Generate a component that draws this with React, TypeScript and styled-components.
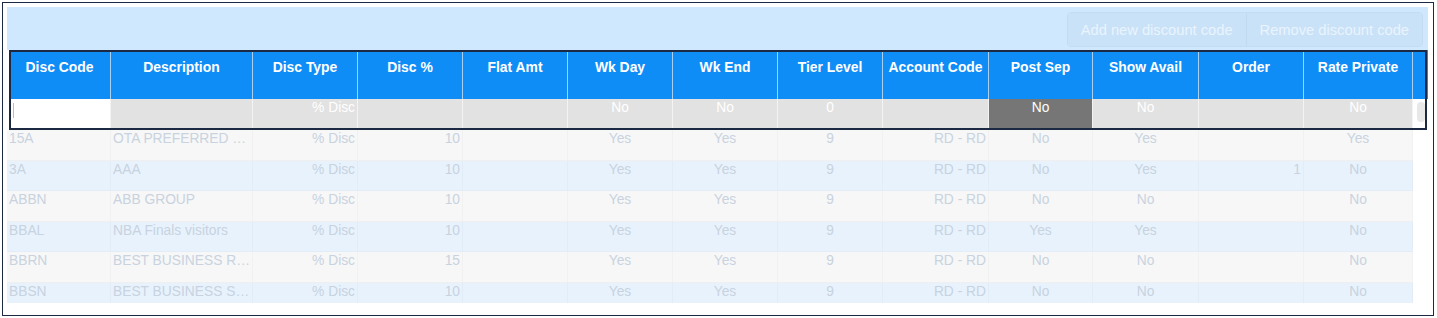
import React from "react"
import styled, { createGlobalStyle } from "styled-components"

type Align = "left" | "center" | "right"

interface Column {
  title: string
  width: number
  align: Align
}

const columns: Column[] = [
  { title: "Disc Code", width: 104, align: "left" },
  { title: "Description", width: 142, align: "left" },
  { title: "Disc Type", width: 105, align: "right" },
  { title: "Disc %", width: 105, align: "right" },
  { title: "Flat Amt", width: 105, align: "right" },
  { title: "Wk Day", width: 105, align: "center" },
  { title: "Wk End", width: 105, align: "center" },
  { title: "Tier Level", width: 105, align: "center" },
  { title: "Account Code", width: 106, align: "right" },
  { title: "Post Sep", width: 104, align: "center" },
  { title: "Show Avail", width: 106, align: "center" },
  { title: "Order", width: 105, align: "right" },
  { title: "Rate Private", width: 109, align: "center" },
]

const rows: string[][] = [
  ["15A", "OTA PREFERRED PARTNER", "% Disc", "10", "", "Yes", "Yes", "9", "RD - RD", "No", "Yes", "", "Yes"],
  ["3A", "AAA", "% Disc", "10", "", "Yes", "Yes", "9", "RD - RD", "No", "Yes", "1", "No"],
  ["ABBN", "ABB GROUP", "% Disc", "10", "", "Yes", "Yes", "9", "RD - RD", "No", "No", "", "No"],
  ["BBAL", "NBA Finals visitors", "% Disc", "10", "", "Yes", "Yes", "9", "RD - RD", "Yes", "Yes", "", "No"],
  ["BBRN", "BEST BUSINESS RATE", "% Disc", "15", "", "Yes", "Yes", "9", "RD - RD", "No", "No", "", "No"],
  ["BBSN", "BEST BUSINESS SPECIAL", "% Disc", "10", "", "Yes", "Yes", "9", "RD - RD", "No", "No", "", "No"],
]

const editValues = ["", "", "% Disc", "", "", "No", "No", "0", "", "No", "No", "", "No"]

// first column is 2px narrower in the frozen block (it sits inside the focus outline)
const template = (shift: number, gutter: number) =>
  columns.map((c, i) => `${i === 0 ? c.width - shift : c.width}px`).join(" ") +
  (gutter ? ` ${gutter}px` : "")

const GlobalStyle = createGlobalStyle`
  html, body {
    margin: 0;
    padding: 0;
    background: #ffffff;
  }
  body {
    font-family: "Liberation Sans", Arial, Helvetica, sans-serif;
  }
`

const Page = styled.div`
  padding: 2px 0 0 2px;
`

const Frame = styled.div`
  box-sizing: border-box;
  width: 1432px;
  height: 314px;
  border: 1px solid #1b2a42;
  background: #ffffff;
  padding: 4px 5px 0 4px;
`

const Panel = styled.div`
  width: 1421px;
  display: flex;
  flex-direction: column;
`

const Toolbar = styled.div`
  height: 43px;
  background: #cfe8fd;
  display: flex;
  justify-content: flex-end;
  align-items: flex-start;
  padding: 5px 5px 0 0;
  box-sizing: border-box;
`

const ButtonGroup = styled.div`
  display: flex;
  height: 35px;
  border: 1px solid #c3dcf2;
  border-radius: 4px;
  overflow: hidden;
  box-sizing: border-box;
`

const ToolButton = styled.button`
  border: none;
  border-left: 1px solid #c1daf0;
  &:first-child {
    border-left: none;
  }
  background: #c9e2f8;
  color: #eaf4fd;
  font-family: "Liberation Sans", Arial, Helvetica, sans-serif;
  font-size: 14.7px;
  padding: 0 13px;
  height: 100%;
  cursor: default;
`

const Frozen = styled.div`
  position: relative;
  margin-left: 2px;
  width: 1419px;

  &::after {
    content: "";
    position: absolute;
    top: 0;
    left: 0;
    right: 1px;
    bottom: 0;
    border: 2px solid #1b2a42;
    pointer-events: none;
  }
`

const HeaderRow = styled.div`
  display: grid;
  grid-template-columns: ${template(2, 15)};
  height: 49px;
  background: #0f8df7;
`

const HeaderCell = styled.div`
  box-sizing: border-box;
  border-right: 1px solid #a9cff2;
  &:last-child {
    border-right: none;
  }
  padding: 9px 2px 0;
  color: #ffffff;
  font-weight: bold;
  font-size: 13.9px;
  line-height: 17px;
  text-align: center;
  white-space: nowrap;
  overflow: hidden;
`

const EditRow = styled.div`
  display: grid;
  grid-template-columns: ${template(2, 15)};
  height: 31px;
`

const EditCell = styled.div<{ $align: Align; $dark?: boolean; $input?: boolean }>`
  box-sizing: border-box;
  background: ${(p) => (p.$input ? "#ffffff" : p.$dark ? "#767676" : "#e2e2e2")};
  border-right: 1px solid #f3f3f3;
  padding: 1px 2px 0;
  color: #ffffff;
  font-size: 13.8px;
  line-height: 16px;
  text-align: ${(p) => p.$align};
  white-space: nowrap;
  overflow: hidden;
`

const Caret = styled.span`
  display: block;
  width: 1px;
  height: 15px;
  margin: 3px 0 0 2px;
  background: #aac0dc;
`

const Gutter = styled.div`
  background: #ffffff;
  padding: 3px 2px 0 4px;
`

const Thumb = styled.div`
  width: 8px;
  height: 20px;
  border-radius: 4px;
  background: #e8e8e8;
`

const Body = styled.div`
  height: 172.7px;
  overflow: hidden;
`

const DataRow = styled.div<{ $alt: boolean }>`
  display: grid;
  grid-template-columns: ${template(0, 0)};
  width: 1406px;
  height: 30.6px;
  box-sizing: border-box;
  border-bottom: 1px solid ${(p) => (p.$alt ? "#e2edf8" : "#efefef")};
  background: ${(p) => (p.$alt ? "#e7f2fd" : "#f7f7f7")};
`

const DataCell = styled.div<{ $align: Align }>`
  box-sizing: border-box;
  border-right: 1px solid rgba(0, 0, 0, 0.025);
  padding: 1px 2px 0 2px;
  color: #c8d3df;
  font-size: 13.8px;
  line-height: 16px;
  text-align: ${(p) => p.$align};
  white-space: nowrap;
  overflow: hidden;
  text-overflow: ellipsis;
`

const App = () => (
  <>
    <GlobalStyle />
    <Page>
      <Frame>
        <Panel>
          <Toolbar>
            <ButtonGroup>
              <ToolButton>Add new discount code</ToolButton>
              <ToolButton>Remove discount code</ToolButton>
            </ButtonGroup>
          </Toolbar>
          <Frozen>
            <HeaderRow>
              {columns.map((c) => (
                <HeaderCell key={c.title}>{c.title}</HeaderCell>
              ))}
              <HeaderCell />
            </HeaderRow>
            <EditRow>
              {columns.map((c, i) => (
                <EditCell
                  key={c.title}
                  $align={c.align}
                  $input={i === 0}
                  $dark={c.title === "Post Sep"}
                >
                  {i === 0 ? <Caret /> : editValues[i]}
                </EditCell>
              ))}
              <Gutter>
                <Thumb />
              </Gutter>
            </EditRow>
          </Frozen>
          <Body>
            {rows.map((r, ri) => (
              <DataRow key={r[0]} $alt={ri % 2 === 1}>
                {r.map((v, ci) => (
                  <DataCell key={ci} $align={columns[ci].align}>
                    {v}
                  </DataCell>
                ))}
              </DataRow>
            ))}
          </Body>
        </Panel>
      </Frame>
    </Page>
  </>
)

export default App
